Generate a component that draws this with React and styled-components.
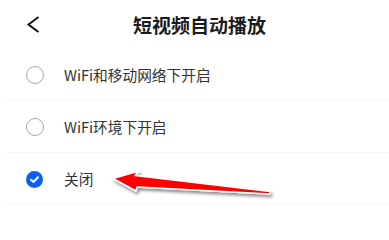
import React from 'react';
import styled, { createGlobalStyle } from 'styled-components';

const GlobalStyle = createGlobalStyle`
  body {
    margin: 0;
    background: #fff;
    font-family: "Noto Sans CJK SC", "Noto Sans", sans-serif;
  }
`;

const options = [
  { id: 'all', label: 'WiFi和移动网络下开启' },
  { id: 'wifi', label: 'WiFi环境下开启' },
  { id: 'off', label: '关闭' },
];

const App = () => {
  const selected = 'off';

  return (
    <Page>
      <GlobalStyle />
      <Header>
        <Back>
          <svg width="13" height="17" viewBox="0 0 13 17">
            <path d="M11.5 1 L1.5 8.5 L11.5 16" fill="none" stroke="#111" strokeWidth="2" strokeLinejoin="miter" />
          </svg>
        </Back>
        <Title>短视频自动播放</Title>
      </Header>
      <List>
        {options.map(o => (
          <Row key={o.id}>
            {o.id === selected ? (
              <Checked>
                <svg width="17" height="17" viewBox="0 0 17 17">
                  <circle cx="8.5" cy="8.5" r="8.5" fill="#0c5ff1" />
                  <path d="M5 8.7 L7.5 11 L12 6.3" fill="none" stroke="#fff" strokeWidth="2" strokeLinecap="round" strokeLinejoin="round" />
                </svg>
              </Checked>
            ) : (
              <Radio />
            )}
            <Label>{o.label}</Label>
            {o.id === selected && (
              <Arrow width="170" height="36" viewBox="0 0 170 36">
                <defs>
                  <filter id="sh" x="-10%" y="-40%" width="120%" height="200%">
                    <feDropShadow dx="1.5" dy="2.5" stdDeviation="1.6" floodColor="#000" floodOpacity="0.45" />
                  </filter>
                </defs>
                <polygon
                  points="5,12.5 31,5 27,9.5 162,25.5 162,28 29,21 28,25"
                  fill="#ff0000"
                  stroke="#fff"
                  strokeWidth="1.6"
                  strokeLinejoin="round"
                  filter="url(#sh)"
                />
              </Arrow>
            )}
          </Row>
        ))}
      </List>
    </Page>
  );
};

export default App;

const Page = styled.div`
  width: 389px;
  height: 226px;
  overflow: hidden;
  background: #fff;
`;

const Header = styled.div`
  display: flex;
  align-items: center;
  height: 49px;
  padding: 0 30px 0 27px;
`;

const Back = styled.div`
  display: flex;
  width: 13px;
  height: 17px;
`;

const Title = styled.h1`
  flex: 1;
  margin: 0;
  text-align: center;
  font-size: 19px;
  font-weight: bold;
  color: #1a1a1a;
  line-height: 1;
`;

const List = styled.div`
  display: flex;
  flex-direction: column;
`;

const Row = styled.div`
  position: relative;
  display: flex;
  align-items: center;
  gap: 20px;
  height: 52px;
  padding-left: 26px;
  box-sizing: border-box;
  &::after {
    content: '';
    position: absolute;
    left: 7px;
    right: 0;
    bottom: 0;
    height: 1px;
    background: #f7f7f7;
  }
`;

const Radio = styled.span`
  width: 16px;
  height: 16px;
  border: 1.3px solid #a8a8a8;
  border-radius: 50%;
  flex-shrink: 0;
`;

const Checked = styled.span`
  display: flex;
  width: 17px;
  height: 17px;
  margin-right: 1px;
  flex-shrink: 0;
`;

const Label = styled.span`
  font-size: 14.7px;
  color: #333;
  line-height: 1;
`;

const Arrow = styled.svg`
  position: absolute;
  left: 108px;
  top: 13px;
  overflow: visible;
`;
